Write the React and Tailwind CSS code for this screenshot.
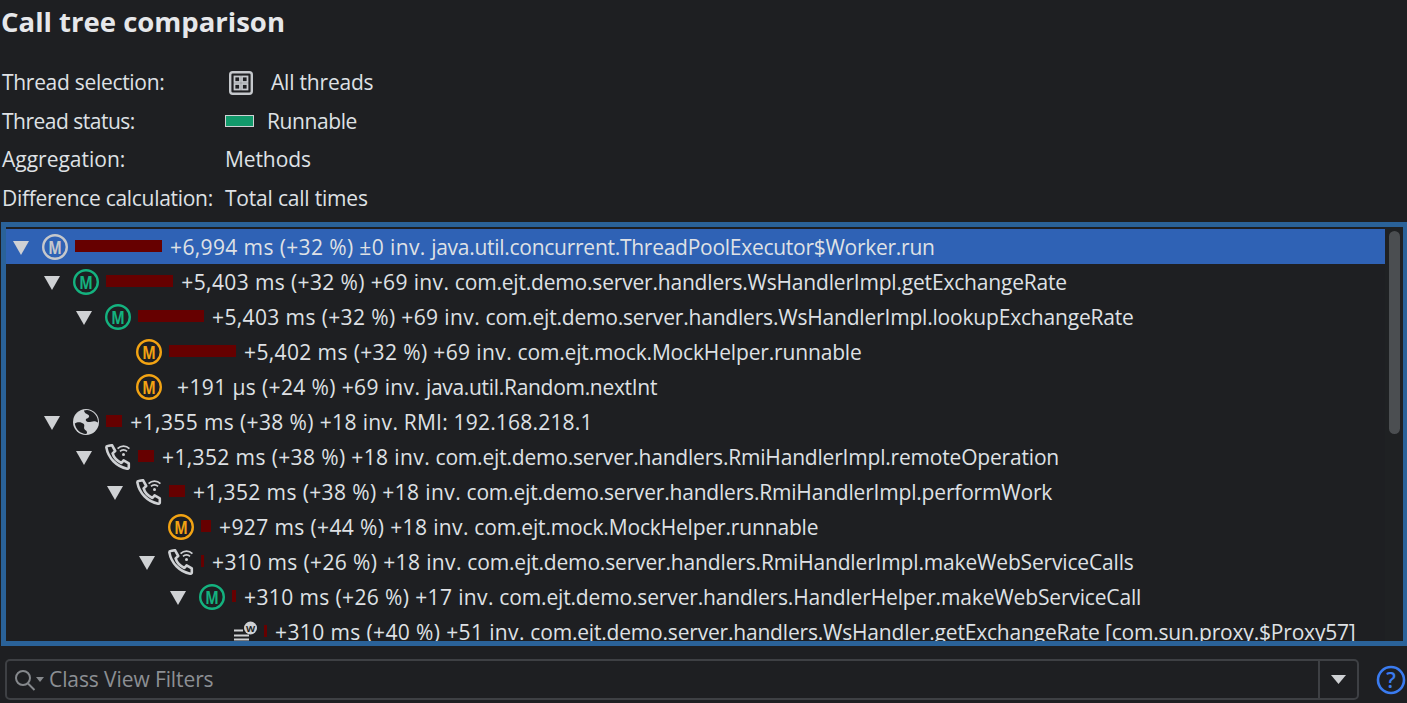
import React from "react";

const BG = "#1e1f22";

function Arrow() {
  return (
    <svg width="16" height="14" viewBox="0 0 16 14" className="shrink-0 mt-[3px]">
      <path d="M0 0H16L8 14Z" fill="#cfd1d4" />
    </svg>
  );
}

function MIcon({ color }) {
  return (
    <svg width="26" height="26" viewBox="0 0 26 26" className="shrink-0">
      <circle cx="13" cy="13" r="11.8" fill="none" stroke={color} strokeWidth="2.4" />
      <text x="13" y="19.5" textAnchor="middle" fill={color} fontSize="18" fontWeight="700" textLength="13.5" lengthAdjust="spacingAndGlyphs" fontFamily="'Open Sans', sans-serif">M</text>
    </svg>
  );
}

function Globe() {
  return (
    <svg width="26" height="26" viewBox="0 0 26 26" className="shrink-0">
      <circle cx="13" cy="13" r="13" fill="#cfd1d4" />
      <path d="M11 1.5C11.5 4.5 14 4.8 15.5 6C17 7.2 15.6 9 14 9.6C12 10.4 12.6 12.6 15 13C18 13.5 20.5 10.5 25 13.5C25.4 8 21 1.6 14 1C13 1 12 1.2 11 1.5Z" fill={BG} />
      <path d="M1.8 14.5C4.5 12.6 8.5 13 10.5 14.8C12.2 16.4 10.5 18.2 11.4 20C12.2 21.5 14 21.5 14 23.5C14 24.2 13.6 24.8 13 25C7.5 24.8 2.8 20.5 1.8 14.5Z" fill={BG} />
    </svg>
  );
}

function Phone() {
  return (
    <svg width="26" height="26" viewBox="0 0 26 26" fill="none" stroke="#cfd1d4" className="shrink-0">
      <path d="M2.5 2L7 1.2L10.2 7L7.6 9.4C8.6 13 12 16.8 16.4 19L18.6 16.4L23.8 19.4L23.8 23.6C23.8 24.4 23 24.9 22.2 24.7C11.5 22.5 3.2 14 1.4 3.6C1.3 2.8 1.8 2.1 2.5 2Z" strokeWidth="2.6" strokeLinejoin="round" />
      <path d="M12.6 4.6C16 1.2 21 1.2 24.4 4.6" strokeWidth="1.7" />
      <path d="M15 7.4C17 5.4 20 5.4 22 7.4" strokeWidth="1.7" />
      <circle cx="18.5" cy="10.6" r="1.5" fill="#cfd1d4" stroke="none" />
    </svg>
  );
}

function WsIcon() {
  return (
    <svg width="26" height="26" viewBox="0 0 26 26" className="shrink-0">
      <path d="M3 11.5H12M3 16.5H18M3 20.5H18" stroke="#cfd1d4" strokeWidth="2" fill="none" />
      <circle cx="19.5" cy="9" r="6.5" fill="#cfd1d4" />
      <text x="19.5" y="12.5" textAnchor="middle" fill={BG} fontSize="9.5" fontWeight="700" fontFamily="'Open Sans', sans-serif">W</text>
    </svg>
  );
}

const GRAY = "#c5c8cc";
const GREEN = "#14b27f";
const ORANGE = "#f2a313";

const rows = [
  { pad: "pl-[7px]", arrow: true, icon: <MIcon color={GRAY} />, bar: "w-[87px]", pre: "+6,994 ms (+32 %) ±0 inv.", text: "java.util.concurrent.ThreadPoolExecutor$Worker.run", track: "tracking-[-0.27px]", selected: true },
  { pad: "pl-[38.3px]", arrow: true, icon: <MIcon color={GREEN} />, bar: "w-[67px]", pre: "+5,403 ms (+32 %) +69 inv.", text: "com.ejt.demo.server.handlers.WsHandlerImpl.getExchangeRate" },
  { pad: "pl-[70px]", arrow: true, icon: <MIcon color={GREEN} />, bar: "w-[66px]", pre: "+5,403 ms (+32 %) +69 inv.", text: "com.ejt.demo.server.handlers.WsHandlerImpl.lookupExchangeRate" },
  { pad: "pl-[101px]", icon: <MIcon color={ORANGE} />, bar: "w-[67px]", pre: "+5,402 ms (+32 %) +69 inv.", text: "com.ejt.mock.MockHelper.runnable", track: "tracking-[-0.16px]" },
  { pad: "pl-[101px]", icon: <MIcon color={ORANGE} />, pre: "+191 µs (+24 %) +69 inv.", text: "java.util.Random.nextInt", track: "tracking-[-0.3px]" },
  { pad: "pl-[38.3px]", arrow: true, icon: <Globe />, bar: "w-[16px]", pre: "+1,355 ms (+38 %) +18 inv.", text: "RMI: 192.168.218.1", track: "tracking-[0.2px]" },
  { pad: "pl-[70px]", arrow: true, icon: <Phone />, bar: "w-[16px]", pre: "+1,352 ms (+38 %) +18 inv.", text: "com.ejt.demo.server.handlers.RmiHandlerImpl.remoteOperation" },
  { pad: "pl-[101px]", arrow: true, icon: <Phone />, bar: "w-[16px]", pre: "+1,352 ms (+38 %) +18 inv.", text: "com.ejt.demo.server.handlers.RmiHandlerImpl.performWork" },
  { pad: "pl-[133px]", icon: <MIcon color={ORANGE} />, bar: "w-[10px]", pre: "+927 ms (+44 %) +18 inv.", text: "com.ejt.mock.MockHelper.runnable", track: "tracking-[-0.16px]" },
  { pad: "pl-[133px]", arrow: true, icon: <Phone />, bar: "w-[3px]", pre: "+310 ms (+26 %) +18 inv.", text: "com.ejt.demo.server.handlers.RmiHandlerImpl.makeWebServiceCalls", track: "tracking-[-0.16px]" },
  { pad: "pl-[164px]", arrow: true, icon: <MIcon color={GREEN} />, bar: "w-[4px]", pre: "+310 ms (+26 %) +17 inv.", text: "com.ejt.demo.server.handlers.HandlerHelper.makeWebServiceCall", track: "tracking-[-0.15px]" },
  { pad: "pl-[196px]", icon: <WsIcon />, bar: "w-[3px]", pre: "+310 ms (+40 %) +51 inv.", text: "com.ejt.demo.server.handlers.WsHandler.getExchangeRate [com.sun.proxy.$Proxy57]" },
];

function Row({ pad, arrow, icon, bar, pre, text, track, selected }) {
  return (
    <div className={`h-[35px] shrink-0 flex items-center ${pad} ${selected ? "bg-[#2f62b5]" : ""}`}>
      <div className="w-[16px] shrink-0 flex justify-center">{arrow ? <Arrow /> : null}</div>
      <div className="ml-[13px] shrink-0 flex">{icon}</div>
      <div className={`ml-[7px] w-[0px] h-[12px] -mt-[2px] shrink-0 bg-[#660000] ${bar || ""}`} />
      <div className="ml-[8px] mt-[2px] whitespace-nowrap">
        <span className="tracking-[0.38px]">{pre}</span>{" "}
        <span className={track || "tracking-[-0.19px]"}>{text}</span>
      </div>
    </div>
  );
}

function InfoRow({ label, track, children }) {
  return (
    <div className="h-[38.7px] flex items-center">
      <div className={`w-[223px] shrink-0 ${track}`}>{label}</div>
      {children}
    </div>
  );
}

export default function App() {
  return (
    <div
      className="w-[1407px] h-[703px] overflow-hidden bg-[#1e1f22] text-[#dfe1e5] text-[21px] flex flex-col"
      style={{ fontFamily: "'Open Sans', 'Noto Sans', sans-serif" }}
    >
      <div className="h-[44px] shrink-0 pl-[1px] flex items-center text-[27.5px] font-bold text-[#e6e7ea]">Call tree comparison</div>
      <div className="h-[178px] shrink-0 pl-[2px] pt-[19.25px]">
        <InfoRow label="Thread selection:" track="tracking-[-0.3px]">
          <svg width="24" height="24" viewBox="0 0 24 24" className="ml-[4px]">
            <rect x="1.2" y="1.2" width="21.6" height="21.6" rx="2.5" fill="none" stroke="#c5c8cc" strokeWidth="2.4" />
            <rect x="5.5" y="5.5" width="5.5" height="5.5" fill="none" stroke="#c5c8cc" strokeWidth="1.8" />
            <rect x="13" y="5.5" width="5.5" height="5.5" fill="none" stroke="#c5c8cc" strokeWidth="1.8" />
            <rect x="5.5" y="13" width="5.5" height="5.5" fill="none" stroke="#c5c8cc" strokeWidth="1.8" />
            <rect x="13" y="13" width="5.5" height="5.5" fill="none" stroke="#c5c8cc" strokeWidth="1.8" />
          </svg>
          <span className="ml-[18px] tracking-[-0.2px]">All threads</span>
        </InfoRow>
        <InfoRow label="Thread status:" track="tracking-[-0.5px]">
          <div className="w-[29px] h-[12px] bg-[#12996b] border border-[#cfd1d4]" />
          <span className="ml-[13px] tracking-[-0.4px]">Runnable</span>
        </InfoRow>
        <InfoRow label="Aggregation:" track="tracking-[0px]"><span className="tracking-[-0.1px]">Methods</span></InfoRow>
        <InfoRow label="Difference calculation:" track="tracking-[-0.3px]"><span className="tracking-[-0.2px]">Total call times</span></InfoRow>
      </div>
      <div className="ml-[1px] h-[424px] shrink-0 border-[5px] border-r-[4px] border-[#2a6299] flex overflow-hidden">
        <div className="flex-1 min-w-0 flex flex-col pt-[2px] overflow-hidden">
          {rows.map((r, i) => <Row key={i} {...r} />)}
        </div>
        <div className="w-[18px] shrink-0 pt-[4px] pl-[4px] pr-[3px] bg-[#1f2123]">
          <div className="h-[203px] rounded-full bg-[#4b4e51]" />
        </div>
      </div>
      <div className="mt-[13px] pl-[5px] flex items-center">
        <div className="w-[1354px] h-[41px] shrink-0 border-2 border-[#3e4044] rounded-[5px] flex items-center">
          <svg width="22" height="24" viewBox="0 0 22 24" className="ml-[8px] shrink-0" fill="none" stroke="#85888c" strokeWidth="2">
            <circle cx="8" cy="10" r="7" />
            <path d="M13 15.5L19.5 22" />
          </svg>
          <svg width="8" height="5" viewBox="0 0 8 5" className="-ml-[1px] shrink-0"><path d="M0 0H8L4 5Z" fill="#85888c" /></svg>
          <span className="ml-[5px] text-[#8c8f94] flex-1 tracking-[-0.1px]">Class View Filters</span>
          <div className="w-[39px] h-full border-l-2 border-[#3e4044] flex items-center justify-center">
            <svg width="15" height="9" viewBox="0 0 15 9"><path d="M0 0H15L7.5 9Z" fill="#cfd1d4" /></svg>
          </div>
        </div>
        <svg width="30" height="30" viewBox="0 0 30 30" className="ml-[17px] shrink-0" fill="none">
          <circle cx="15" cy="15" r="13" stroke="#3a7bf0" strokeWidth="2.6" />
          <text x="15" y="22.5" textAnchor="middle" fill="#3a7bf0" fontSize="21" fontWeight="600" fontFamily="'Open Sans', sans-serif">?</text>
        </svg>
      </div>
    </div>
  );
}
